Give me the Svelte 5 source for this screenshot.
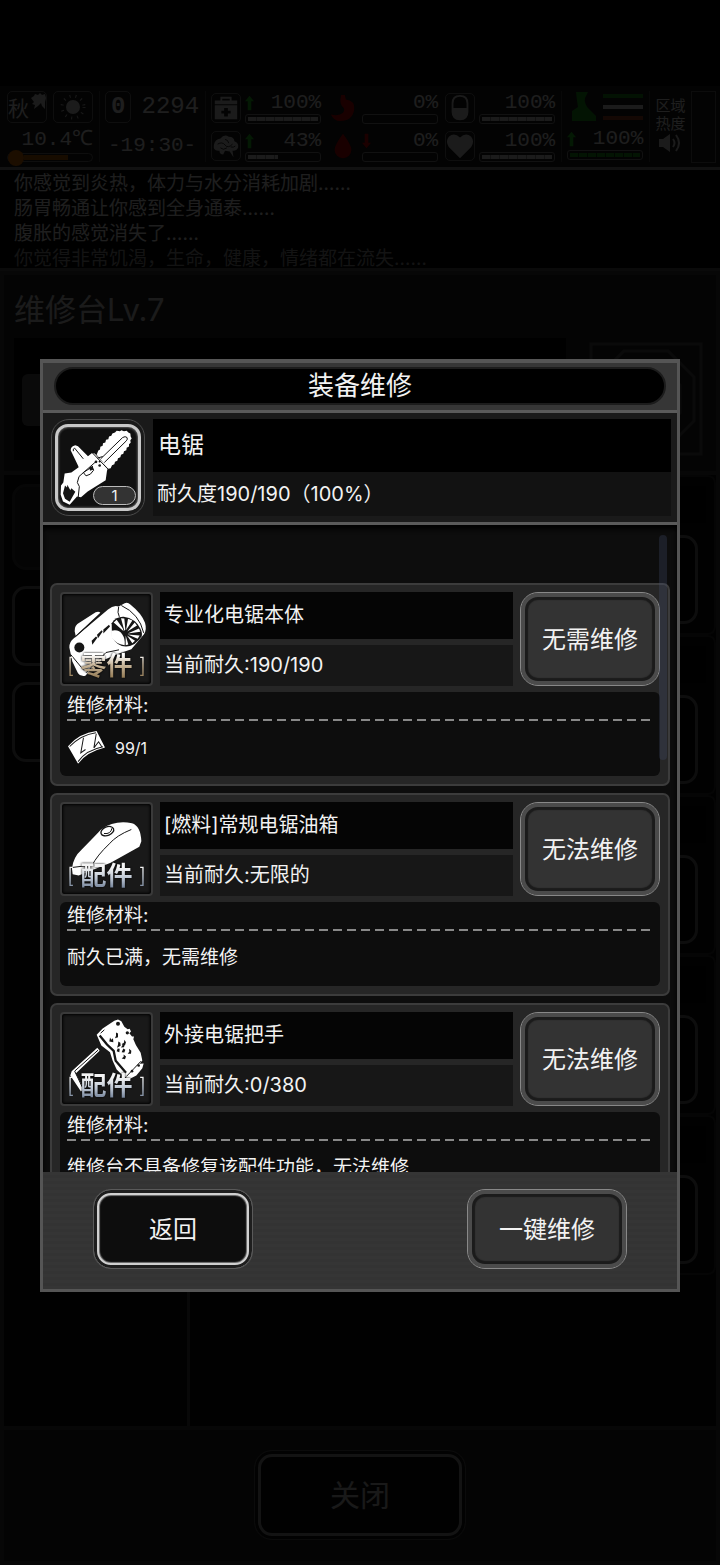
<script lang="ts">
  type Part = {
    kind: 'body' | 'tank' | 'handle';
    tag: string;
    name: string;
    durability: string;
    action: string;
    note?: string;
    cost?: string;
  };

  const parts: Part[] = [
    { kind: 'body', tag: '零件', name: '专业化电锯本体', durability: '190/190', action: '无需维修', cost: '99/1' },
    { kind: 'tank', tag: '配件', name: '[燃料]常规电锯油箱', durability: '无限的', action: '无法维修', note: '耐久已满，无需维修' },
    { kind: 'handle', tag: '配件', name: '外接电锯把手', durability: '0/380', action: '无法维修', note: '维修台不具备修复该配件功能，无法维修' },
  ];

  const logs = [
    '你感觉到炎热，体力与水分消耗加剧……',
    '肠胃畅通让你感到全身通泰……',
    '腹胀的感觉消失了……',
    '你觉得非常饥渴，生命，健康，情绪都在流失……',
  ];

  const stats = [
    { icon: 'medkit', value: 100, trend: 'up' },
    { icon: 'stomach', value: 0, trend: '' },
    { icon: 'pill', value: 100, trend: '' },
    { icon: 'brain', value: 43, trend: 'up' },
    { icon: 'blood', value: 0, trend: 'down' },
    { icon: 'heart', value: 100, trend: '' },
  ];

  let open = $state(true);
</script>

<div class="game">
  <header class="status">
    <div class="weather">
      <div class="pair">
        <span class="box season">秋
          <svg class="leaf" viewBox="0 0 16 16" aria-hidden="true"><path d="M1 5l3-2 1-2 3 1 2-2 2 2 3-1 1 4-1 4v7l-3-3-1-3-3 3-4 3 1-4-3-1 2-2z" /></svg>
        </span>
        <span class="box">
          <svg width="30" height="30" viewBox="0 0 30 30" aria-hidden="true">
            <circle cx="15" cy="15" r="7" />
            <circle class="ray" cx="15" cy="15" r="11" />
          </svg>
        </span>
      </div>
      <span class="lcd">10.4℃</span>
      <div class="thermo"><i></i><b></b></div>
    </div>
    <i class="sep"></i>
    <div class="clock">
      <div class="pair">
        <span class="box day lcd">0</span>
        <span class="lcd year">2294</span>
      </div>
      <span class="lcd time">-19:30-</span>
    </div>
    <i class="sep"></i>
    <div class="stats">
      {#each stats as s}
        <div class="stat">
          <span class="box small {s.icon}">
            <svg viewBox="0 0 30 30" width="28" height="28" aria-hidden="true">
              {#if s.icon === 'medkit'}
                <path d="M9 7V3h12v4h6v4H3V7zM11 7h8V5h-8zM3 12h24v15H3zM13 15v3h-3v3h3v3h4v-3h3v-3h-3v-3z" fill-rule="evenodd" />
              {:else if s.icon === 'stomach'}
                <path d="M13 1h4l1 5q10 1 9 11-2 12-15 12-7 0-10-7 9 2 13-2 3-4-1-7-3-4-1-12z" />
              {:else if s.icon === 'pill'}
                <path d="M15 1q9 0 9 9v9q0 9-9 9t-9-9v-9q0-9 9-9zm0 2q-7 0-7 7v5h14v-5q0-7-7-7z" fill-rule="evenodd" />
              {:else if s.icon === 'brain'}
                <path d="M2 14q1-6 7-7 4-5 9-2 6 0 6 5 5 2 4 7-2 4-6 3l1 7-4-6-5-1-2 4q-4 0-4-4-7 1-6-6z" />
                <path class="fold" d="M6 13q5-3 8 1t8-1M9 17q3 3 7 0M14 8q3 0 4 4M20 16q3 1 5-1" />
              {:else if s.icon === 'blood'}
                <path d="M15 2q9 12 9 17a9 9 0 0 1-18 0q0-5 9-17z" />
              {:else}
                <path d="M15 28L3 16Q-1 10 3 5q6-5 12 1 6-6 12-1 4 5 0 11z" />
              {/if}
            </svg>
          </span>
          <div class="gauge">
            <span class="lcd {s.trend}">
              {#if s.trend}
                <svg class="arrow" viewBox="0 0 10 16" aria-hidden="true"><path d="M5 0l5 6H7v10H3V6H0z" /></svg>
              {/if}
              <span>{s.value}%</span>
            </span>
            <div class="meter"><i style="width: {s.value}%"></i></div>
          </div>
        </div>
      {/each}
    </div>
    <i class="sep"></i>
    <div class="move">
      <div class="pair">
        <svg viewBox="0 0 30 30" width="30" height="30" aria-hidden="true"><path d="M9 0h12l-3 6q-1 5 3 10l8 8v5H5V19l6-4-1-6z" /></svg>
        <div class="lines"><i></i><i></i><i></i></div>
      </div>
      <span class="lcd up">
        <svg class="arrow" viewBox="0 0 10 16" aria-hidden="true"><path d="M5 0l5 6H7v10H3V6H0z" /></svg>
        <span>100%</span>
      </span>
      <div class="meter green"><i style="width: 100%"></i></div>
    </div>
    <i class="sep"></i>
    <div class="zone">
      <span>区域</span>
      <span>热度</span>
      <svg viewBox="0 0 24 20" width="24" height="20" aria-hidden="true">
        <path d="M1 6h4l7-5v18l-7-5H1z" />
        <path class="wave" d="M15 6q3 4 0 8M18 2q6 8 0 16" />
      </svg>
    </div>
    <div class="heat"></div>
  </header>

  <div class="log">
    {#each logs as line}
      <p>{line}</p>
    {/each}
  </div>

  <main class="bench">
    <section class="top">
      <h1>维修台Lv.7</h1>
      <div class="preview">
        <div class="tray"><span class="mini"></span></div>
        <svg class="gear" viewBox="0 0 120 120" aria-hidden="true">
          <path d="M5 5h110v110H5zM38 12h44l26 26v44l-26 26H38L12 82V38zM46 26h28l20 20v28L74 94H46L26 74V46z" />
        </svg>
      </div>
    </section>
    <section class="columns">
      <div class="slots">
        <span class="tab"></span>
        <span class="slot"></span>
        <span class="slot"></span>
      </div>
      <div class="rows">
        {#each [1, 2, 3, 4, 5] as _}
          <div class="row"><span class="strip"></span><span class="slot"></span></div>
        {/each}
      </div>
    </section>
    <footer class="bottom">
      <button class="btn dark close">关闭</button>
    </footer>
  </main>
</div>

{#if open}
  <div class="scrim">
    <div class="dialog" role="dialog" aria-modal="true" aria-labelledby="dialog-title">
      <div class="title"><h2 id="dialog-title">装备维修</h2></div>

      <div class="info">
        <div class="ring">
          <div class="weapon">
            <svg viewBox="58 217 240 240" aria-hidden="true">
              <path class="ink" d="M174 299l5-13 5-3 1-8 7-3 1-8 7-2 2-8 7-2 2-8 7-2 3-7 8-3 5-5 10 1 4-3 8 3 8-1 5 5 6 3 1 9 3 6-4 5 1 8-5 4 0 7-7 4-1 7-7 3-2 8-7 3-2 7-7 3-2 8-7 3-2 7-7 3-4 9-7 2z" />
              <path class="cut" d="M186 311l66-64q8-5 13 0 3 5-2 10l-66 65" />
              <path class="ink" d="M96 285q0-12 14-15l8 3 30 30 11-9 9 1 40 43-3 9-4 28-54 34-20 17-12-2-22 25-20-10-7-20 1-28 7-9 4-27 20-3 22-16-2-5z" />
              <path class="cut" d="M104 288q-2-8 4-9l26 32M162 294l48 50M176 309l16-5M118 432l4-38-6-12 5-18 51-45M134 352l8 10 13-5 10-12-4-10z" />
              <path class="hole" d="M79 391l6 6 1-8 9 16 3-6 12 11-17 30-14-9-6-17z" />
              <circle class="hole" cx="172" cy="320" r="4" /><circle class="hole" cx="183" cy="319" r="3" />
              <circle class="hole" cx="183" cy="331" r="4" /><path class="hole" d="M152 337l11-5 0 12-9 3z" />
            </svg>
            <span class="count">1</span>
          </div>
        </div>
        <div class="desc">
          <p class="weapon-name">电锯</p>
          <p class="weapon-life">耐久度190/190（100%）</p>
        </div>
      </div>

      <div class="list-wrap">
        <div class="list">
          {#each parts as part}
            <article class="part">
              <div class="head">
                <div class="thumb">
                  {#if part.kind === 'body'}
                    <svg viewBox="66 223 267 267" aria-hidden="true">
                      <path class="ink" d="M104 333q-1-18 15-26l48-31q10-4 14 2l-74 69z" />
                      <path class="ink" d="M88 382q0-17 12-26l104-88q17-15 32-9l18-10q10-3 17 4 34 27 44 55 6 21-3 34l-38 45-35 12-66 28-37 40q-15 3-22-8l-17-35z" />
                      <path class="cut" d="M106 350l78-71M236 260q-5 18 2 30M244 256q54 25 67 82M92 403l40 48M138 458l60-61 39-8" />
                      <path class="hole" d="M215 309q13-20 36-19 35 5 50 35 7 15 4 23-17 28-46 31-26 1-43-28z" />
                      <path class="ink" d="M214 332q22-6 33 11 9 13 7 32-27-4-40-24zM221 307l9-8 18 25 3 9zM243 294l10 1 3 34-3 3zM264 296l13 5-19 29zM284 307l7 9-29 18zM297 325l4 10-38 5zM299 346l-6 10-30-13zM285 362l-8 7-16-23zM265 373l-8 2 0-29z" />
                      <circle class="hole" cx="118" cy="382" r="15" />
                      <path class="hole" d="M155 362l13-13 4 4-15 21zM171 344l14-14 3 4-14 20zM190 328l17-14 3 5-20 21z" />
                    </svg>
                  {:else if part.kind === 'tank'}
                    <svg viewBox="36 43 267 267" aria-hidden="true">
                      <path class="ink" d="M66 236q2-34 30-59 45-46 58-60 40-28 92-18 26 8 28 54l-6 17-86 48-96 38-18-4z" />
                      <path class="cut" d="M126 226q15-30 52-65 21-25 66-43M66 232l64-8" />
                      <ellipse class="rim" cx="172" cy="123" rx="20" ry="13" transform="rotate(-22 172 123)" />
                      <path class="cut" d="M162 130q20 3 24-16" />
                    </svg>
                  {:else}
                    <svg viewBox="36 43 267 267" aria-hidden="true">
                      <path class="ink" d="M142 143l7 9-72 68 24 46-8 8-32-48 4-13z" />
                      <path class="cut" d="M144 150l-70 63 24 50" />
                      <path class="ink" d="M140 104l18-19 35-23 11-4 10 5 9 17 10 7 6-1 4 8-5 5 8 10 6 0-2 8 8 18 14 23 5 23-8 10 12-1-4 14-18 22-22 11-19-11-18-18-12-26-8-26-26-20z" />
                      <path class="cut heavy" d="M149 106l22 27 20 19 6 30 31 36" />
                      <path class="cut" d="M152 99l11-10M229 229l24-25 20-21" />
                      <g class="hole">
                        <path d="M180 112l4 7 5-5 1 12-12-2zM198 97l6 3 0 11-9 3 3-7zM205 124l6 4 1 9-11 6 3-9zM223 119l5 7-3 9-10-1 7-7zM203 145l6 1-1 10-8-3zM221 163l7 6-3 8-10-2 6-5zM237 146l7 6-1 9-10 0 5-6zM217 129l7 4-2 8-9 1 4-6zM220 145l6 4-3 8-8-1z" />
                        <circle cx="204" cy="71" r="6" /><circle cx="232" cy="98" r="5" />
                        <circle cx="246" cy="213" r="4" /><circle cx="266" cy="196" r="4" />
                      </g>
                    </svg>
                  {/if}
                  <span class="tag {part.kind}"><i>[</i><b>{part.tag}</b><i>]</i></span>
                </div>
                <div class="fields">
                  <p class="name">{part.name}</p>
                  <p class="life">当前耐久:{part.durability}</p>
                </div>
                <button class="btn raised repair">{part.action}</button>
              </div>
              <div class="materials">
                <h3>维修材料:</h3>
                <div class="dash"></div>
                <div class="need">
                  {#if part.cost}
                    <svg viewBox="83 636 116 104" width="39" height="35" aria-hidden="true">
                      <path class="ink" d="M86 684q34-39 85-45l25 49q-54 13-80 48z" />
                      <path class="cut" d="M91 685q34-35 78-41M116 730q24-34 74-44M132 659l-8 45 14-10M170 647l-7 42 14-18 9 14" />
                    </svg>
                    <span class="cost">{part.cost}</span>
                  {:else}
                    <span>{part.note}</span>
                  {/if}
                </div>
              </div>
            </article>
          {/each}
        </div>
        <span class="thumb-bar"></span>
      </div>

      <div class="actions">
        <button class="btn dark back" onclick={() => (open = false)}>返回</button>
        <button class="btn raised all">一键维修</button>
      </div>
    </div>
  </div>
{/if}

<style>
  :global(body) {
    background: #000;
  }

  * {
    box-sizing: border-box;
  }

  .game,
  .scrim,
  button {
    font-family: Inter, "Noto Sans CJK SC", sans-serif;
    color: #f2f2f2;
  }

  p, h1, h2, h3 {
    margin: 0;
    font-weight: 400;
  }

  svg {
    display: block;
    fill: #ddd;
  }

  /* game screen behind the dialog */
  .game {
    display: flex;
    flex-direction: column;
    min-height: 100vh;
    padding-top: 86px;
    background: #000;
  }

  .status {
    display: flex;
    justify-content: space-between;
    height: 84px;
    padding: 5px 4px 5px 7px;
    background: #181818;
    border-bottom: 3px solid #888;
  }

  .sep {
    width: 1px;
    background: #444;
  }

  .pair {
    display: flex;
    justify-content: space-between;
    align-items: center;
  }

  .box {
    position: relative;
    display: flex;
    align-items: center;
    justify-content: center;
    width: 40px;
    height: 32px;
    border: 1px solid #777;
    border-radius: 5px;
  }

  .box.small {
    width: 30px;
    height: 30px;
  }

  .season {
    justify-content: flex-start;
    font-size: 21px;
  }

  .leaf {
    position: absolute;
    top: 1px;
    right: 0;
    width: 16px;
  }

  .ray {
    fill: none;
    stroke: #ccc;
    stroke-width: 3;
    stroke-dasharray: 1 5;
  }

  .lcd {
    display: flex;
    justify-content: flex-end;
    font-family: "Liberation Mono", monospace;
    font-size: 21px;
    line-height: 22px;
    color: #f0f0f0;
  }

  .weather {
    width: 86px;
  }

  .weather .lcd {
    margin-top: 6px;
  }

  .thermo {
    display: flex;
    align-items: center;
    height: 9px;
    margin-top: 2px;
    border: 1px solid #777;
    border-radius: 5px;
  }

  .thermo i {
    flex: none;
    width: 16px;
    height: 16px;
    border-radius: 50%;
    background: #e07000;
  }

  .thermo b {
    width: 44px;
    height: 5px;
    background: #b86000;
  }

  .clock {
    width: 94px;
  }

  .clock .day {
    width: 26px;
    font-weight: bold;
    font-size: 24px;
    justify-content: center;
  }

  .clock .year {
    font-size: 24px;
  }

  .clock .time {
    justify-content: center;
    margin-top: 12px;
  }

  .stats {
    display: grid;
    grid-template-columns: repeat(3, 110px);
    gap: 7px;
    padding-top: 2px;
  }

  .stat {
    display: flex;
    gap: 4px;
  }

  .gauge {
    flex: 1;
  }

  .stat .lcd,
  .move .lcd {
    justify-content: space-between;
    line-height: 20px;
    height: 20px;
  }

  .lcd > span {
    margin-left: auto;
  }

  .arrow {
    width: 9px;
    fill: #2c2;
  }

  .down .arrow {
    fill: #d00;
    transform: rotate(180deg);
  }

  .stomach svg, .blood svg {
    fill: #c00;
  }

  .stomach, .blood {
    border-color: transparent;
  }

  .fold {
    fill: none;
    stroke: #222;
    stroke-width: 1;
  }

  .meter {
    height: 10px;
    margin-top: 1px;
    padding: 2px;
    border: 1px solid #888;
    border-radius: 3px;
  }

  .meter i {
    display: block;
    height: 100%;
    background: repeating-linear-gradient(90deg, #ddd 0 8px, #888 8px 9px);
  }

  .move {
    width: 76px;
  }

  .move .pair {
    height: 32px;
    margin-bottom: 6px;
  }

  .move .pair svg {
    fill: #1fa01f;
  }

  .lines {
    display: grid;
    gap: 7px;
    width: 40px;
  }

  .lines i {
    height: 4px;
    background: #1f901f;
  }

  .lines i:nth-child(2) {
    background: #ddd;
  }

  .lines i:nth-child(3) {
    background: #a04020;
  }

  .meter.green i {
    background: repeating-linear-gradient(90deg, #1fa01f 0 8px, #0c3c0c 8px 9px);
  }

  .zone {
    display: flex;
    flex-direction: column;
    align-items: center;
    padding-top: 6px;
    font-size: 15px;
    line-height: 18px;
  }

  .wave {
    fill: none;
    stroke: #ddd;
    stroke-width: 2;
  }

  .heat {
    width: 25px;
    height: 72px;
    border: 1px solid #666;
  }

  .log {
    height: 101px;
    padding: 1px 14px;
    border-bottom: 3px solid #555;
    font-size: 19px;
    line-height: 25px;
    overflow: hidden;
  }

  .log p:last-child {
    color: #999;
  }

  .bench {
    display: flex;
    flex: 1;
    flex-direction: column;
    border: 4px solid #383838;
    background: #222;
  }

  .top {
    height: 200px;
    padding: 14px 10px 10px;
    background: #242424;
    border-bottom: 4px solid #383838;
  }

  h1 {
    font-size: 31px;
    line-height: 42px;
    color: #ddd;
  }

  .preview {
    display: flex;
    justify-content: space-between;
    gap: 20px;
    margin-top: 7px;
  }

  .tray {
    flex: 1;
    height: 122px;
    padding: 36px 8px;
    background: #000;
  }

  .mini {
    display: block;
    width: 60px;
    height: 52px;
    border-radius: 6px;
    background: #555;
  }

  .gear {
    width: 120px;
    fill: none;
    stroke: #555;
    stroke-width: 3;
  }

  .columns {
    display: grid;
    flex: 1;
    grid-template-columns: 186px 1fr;
    background: #080808;
  }

  .slots {
    display: flex;
    flex-direction: column;
    gap: 16px;
    padding: 9px 8px;
    border-right: 3px solid #444;
  }

  .tab,
  .slot {
    border: 3px solid #6c6c6c;
    border-radius: 14px;
  }

  .tab {
    height: 86px;
    border-color: #333;
    background: #202020;
  }

  .slots .slot {
    height: 80px;
    background: #000;
  }

  .row {
    display: flex;
    flex-direction: column;
    gap: 12px;
    height: 160px;
    padding: 9px 8px;
    border: 2px solid #282828;
    border-radius: 8px;
  }

  .strip {
    height: 38px;
    background: #000;
  }

  .row .slot {
    height: 90px;
    margin-right: 8px;
    background: #000;
  }

  .bottom {
    display: flex;
    justify-content: center;
    padding: 20px 0 21px;
    border-top: 4px solid #383838;
    background: #242424;
  }

  /* shared buttons */
  .btn {
    padding: 0 0 4px;
    font-size: 24px;
    cursor: pointer;
  }

  .raised {
    border: 1px solid #888;
    border-radius: 18px;
    background: #333;
    box-shadow: inset 0 0 0 4px #4b4b4b, inset 0 0 1px 7px #1b1b1b;
  }

  .dark {
    border: 1px solid #5a5a5a;
    border-radius: 18px;
    background: #0d0d0d;
    box-shadow: inset 0 0 0 3px #1e1e1e, inset 0 0 0 5px #d0d0d0, inset 0 0 1px 6px #777;
  }

  .close {
    width: 212px;
    height: 90px;
    font-size: 30px;
    color: #ccc;
    box-shadow: inset 0 0 0 3px #111, inset 0 0 0 6px #999;
  }

  /* dialog */
  .scrim {
    position: absolute;
    inset: 0;
    display: flex;
    align-items: center;
    justify-content: center;
    padding: 86px 40px 0;
    background: rgba(0, 0, 0, 0.88);
  }

  .dialog {
    width: 100%;
    border: 3px solid #555;
    border-top-width: 4px;
    background: #1a1a1a;
  }

  .title {
    padding: 4px 11px 5px;
    background: #363636;
    border-bottom: 3px solid #5a5a5a;
  }

  h2 {
    border: 2px solid #1c1c1c;
    border-radius: 19px;
    background: #000;
    font-size: 26px;
    line-height: 34px;
    text-align: center;
  }

  .info {
    display: flex;
    gap: 8px;
    padding: 6px 6px 6px 8px;
    border-bottom: 3px solid #5a5a5a;
  }

  .ring {
    width: 94px;
    height: 97px;
    padding: 4px 3px;
    border: 1px solid #4a4a4a;
    border-radius: 18px;
  }

  .weapon {
    position: relative;
    height: 100%;
    border: 3px solid #c8c8c8;
    border-radius: 13px;
    background: #101010;
    box-shadow: inset 0 0 2px 1px #555;
  }

  .weapon svg {
    width: 100%;
    height: 100%;
  }

  .count {
    position: absolute;
    right: 2px;
    bottom: 3px;
    width: 43px;
    border: 1px solid #bbb;
    border-radius: 10px;
    background: #333;
    font-size: 15px;
    line-height: 17px;
    text-align: center;
  }

  .ink {
    fill: #fff;
  }

  .cut {
    fill: none;
    stroke: #151515;
    stroke-width: 3;
  }

  .heavy {
    stroke-width: 7;
  }

  .rim {
    fill: #fff;
    stroke: #151515;
    stroke-width: 4;
  }

  .hole {
    fill: #151515;
  }

  .desc {
    flex: 1;
    background: #121212;
  }

  .weapon-name {
    padding-left: 5px;
    background: #000;
    font-size: 23px;
    line-height: 53px;
  }

  .weapon-life {
    padding-left: 4px;
    font-size: 20px;
    line-height: 44px;
  }

  .list-wrap {
    position: relative;
    background: #0d0d0d;
  }

  .list {
    display: flex;
    flex-direction: column;
    gap: 7px;
    max-height: 647px;
    padding: 58px 7px 0;
    overflow-y: auto;
    scrollbar-width: none;
    box-shadow: inset 0 4px 5px #000;
  }

  .thumb-bar {
    position: absolute;
    top: 10px;
    right: 10px;
    width: 8px;
    height: 225px;
    border-radius: 4px;
    background: rgba(72, 84, 120, 0.26);
  }

  .part {
    flex: none;
    padding: 7px 8px 8px;
    border: 2px solid #3c3c3c;
    border-radius: 7px;
    background: #262626;
  }

  .head {
    display: flex;
    gap: 7px;
  }

  .thumb {
    position: relative;
    width: 93px;
    height: 94px;
    border: 2px solid #3a3a3a;
    border-radius: 4px;
    background: #191919;
    box-shadow: inset 0 0 3px 1px #000;
  }

  .thumb svg {
    width: 100%;
    height: 100%;
  }

  .tag {
    position: absolute;
    right: 5px;
    bottom: 4px;
    left: 5px;
    display: flex;
    align-items: center;
    justify-content: space-between;
    line-height: 28px;
  }

  .tag b,
  .tag i {
    background: linear-gradient(#f4f4f4 20%, #b8c2d0 60%, #64748c);
    background-clip: text;
    color: transparent;
    font-style: normal;
  }

  .tag.body b,
  .tag.body i {
    background: linear-gradient(#fff 10%, #c9b79c 45%, #8a7048);
    background-clip: text;
  }

  .tag b {
    font-size: 26px;
    filter: drop-shadow(0 0 1px #000);
  }

  .tag i {
    font-size: 21px;
    font-weight: 300;
  }

  .fields {
    display: flex;
    flex: 1;
    flex-direction: column;
    gap: 6px;
  }

  .fields p {
    padding-left: 4px;
    font-size: 20px;
  }

  .name {
    background: #050505;
    line-height: 47px;
  }

  .life {
    background: #171717;
    line-height: 41px;
  }

  .repair {
    width: 140px;
  }

  .materials {
    height: 84px;
    margin-top: 6px;
    padding: 0 7px;
    border-radius: 6px;
    background: #0d0d0d;
    font-size: 19px;
  }

  h3 {
    font-size: 19px;
    line-height: 27px;
  }

  .dash {
    height: 2px;
    background: repeating-linear-gradient(90deg, #888 0 9px, transparent 9px 14px);
  }

  .need {
    display: flex;
    align-items: center;
    gap: 9px;
    height: 54px;
    line-height: 24px;
    padding-bottom: 1px;
  }

  .cost {
    font-size: 16px;
  }

  .actions {
    display: flex;
    justify-content: space-between;
    padding: 17px 50px 20px;
    background: repeating-linear-gradient(#353535 0 3px, #333 3px 6px);
  }

  .back,
  .all {
    width: 160px;
    height: 80px;
  }
</style>
